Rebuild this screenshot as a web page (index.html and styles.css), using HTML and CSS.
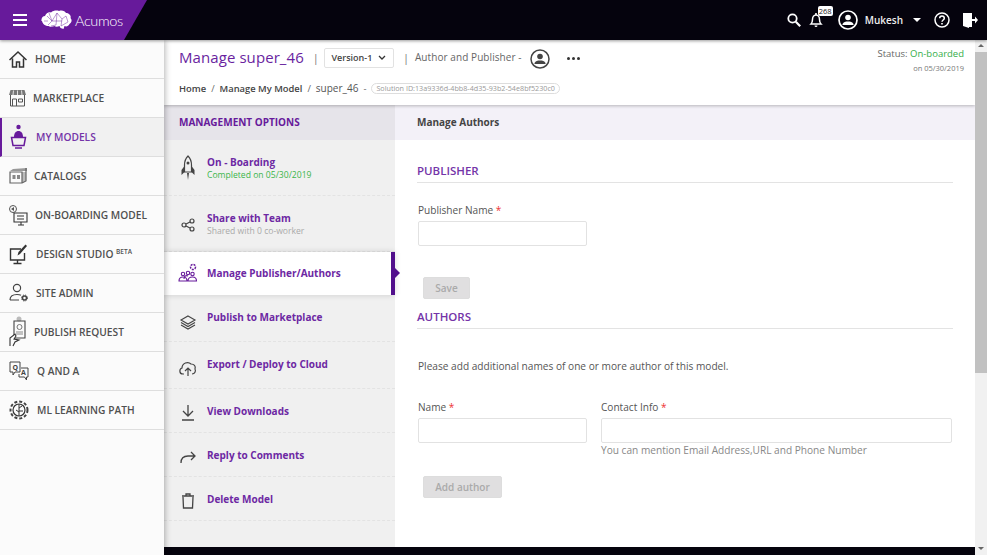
FILE: index.html
```html
<!DOCTYPE html>
<html lang="en">
<head>
    <meta charset="UTF-8">
    <meta name="viewport" content="width=device-width, initial-scale=1.0">
    <title>Acumos - Manage super_46</title>
    <link rel="stylesheet" href="styles.css">
</head>
<body>
    <header class="topbar">
        <div class="brand">
            <div class="burger"><span></span><span></span><span></span></div>
            <svg class="brain" width="31" height="20" viewBox="0 0 31 20">
                <path fill="#fff" d="M.5 11C0 8 2 6 4 6c1-3 4-4.500 6-3.500C12 .5 16 0 18 1c3-1 6 0 7 2 3 0 5.500 3 4.500 5 2 2 1 5-1 6-1 2-3 3-5 2l-1 3-3-1-1-2c-2 1-4 1-5 0-2 1-5 1-6 0-3 0-6-2-6.500-5z"/>
                <path fill="none" stroke="#671a9b" stroke-width=".45" d="M6 6l5 5-4 4M11 11l5-8 5 6 4-3M16 3l-1 12M21 9l-1 7M11 11h10M3 11h4M8 3l3 8M25 6l2 6-7 4M15 15l-5 1"/>
            </svg>
            <span class="brand-name">Acumos</span>
        </div>
        <div class="top-tools">
            <svg class="tool-search" width="16" height="16" viewBox="0 0 16 16"><circle cx="6.5" cy="6.5" r="4.2" fill="none" stroke="#fff" stroke-width="1.8"/><path d="M9.8 9.8l4.4 4.4" stroke="#fff" stroke-width="2.2"/></svg>
            <div class="bell">
                <svg width="14" height="16" viewBox="0 0 14 16"><path fill="none" stroke="#fff" stroke-width="1.5" d="M2 12c1-1 1.500-2 1.500-4.500S5 3 7 3s3.500 2 3.500 4.500S11 11 12 12z"/><path fill="#fff" d="M5.500 13.500h3a1.500 1.500 0 0 1-3 0zM6.200 1h1.600v2H6.200z"/></svg>
                <span class="badge">268</span>
            </div>
            <svg class="tool-user" width="20" height="20" viewBox="0 0 20 20"><circle cx="10" cy="10" r="9" fill="none" stroke="#fff" stroke-width="1.700"/><circle cx="10" cy="7.500" r="2.800" fill="#fff"/><path fill="#fff" d="M4.500 14c1-2 3-2.500 5.500-2.500s4.500.5 5.500 2.500v1h-11z"/></svg>
            <span class="user-name">Mukesh</span>
            <span class="caret"></span>
            <svg class="tool-help" width="16" height="16" viewBox="0 0 16 16"><circle cx="8" cy="8" r="7" fill="none" stroke="#fff" stroke-width="1.500"/><path fill="none" stroke="#fff" stroke-width="1.500" d="M5.700 6.200c0-3 4.600-3 4.600 0 0 1.800-2.300 1.800-2.300 3.600"/><path fill="#fff" d="M7.200 11h1.600v1.600H7.200z"/></svg>
            <svg class="tool-exit" width="15" height="16" viewBox="0 0 15 16"><path fill="#fff" d="M0 1h9v14H6v1L0 14z"/><path fill="#fff" d="M9 7h3V4.500L15 8l-3 3.500V9H9z"/><path fill="#05030d" d="M10 1.500h-.500V6H10zM10 10h-.500v4.500H10z"/></svg>
        </div>
    </header>

    <div class="page">
        <nav class="sidebar">
            <a class="nav-item">
                <svg width="18" height="22" viewBox="0 0 18 22"><path fill="none" stroke="#333" stroke-width="1.500" d="M.5 12L9 4l8.500 8M3.500 10.500V19h4v-5h3v5h4v-8.500"/></svg>
                <span>HOME</span>
            </a>
            <a class="nav-item">
                <svg width="16" height="22" viewBox="0 0 16 22" overflow="visible"><path fill="#777" d="M1.500 3h14l1.500 5H0z"/><path stroke="#fbfbfb" stroke-width=".8" d="M4.500 3.500L4 8M8.500 3.500V8M12.500 3.500L13 8"/><path fill="none" stroke="#555" stroke-width="1" d="M1.500 8v11h14V8M3.500 19v-7h4v7M9.500 12h4v3h-4z"/></svg>
                <span>MARKETPLACE</span>
            </a>
            <a class="nav-item active">
                <svg width="19" height="26" viewBox="0 0 19 26"><circle cx="9.500" cy="3" r="2.200" fill="#671a9b"/><path fill="#671a9b" d="M5 13c0-4 2-6 4.500-6S14 9 14 13z"/><path fill="none" stroke="#671a9b" stroke-width="1.500" d="M2.500 13.500h14l-1.500 8H4zM6 24h7"/></svg>
                <span>MY MODELS</span>
            </a>
            <a class="nav-item">
                <svg width="17" height="22" viewBox="0 0 17 22" overflow="visible"><path fill="#999" d="M4 4l14-1v3H1z"/><path fill="#bbb" d="M13 7h4v9l-4 2z"/><path fill="none" stroke="#666" stroke-width="1.200" d="M1 7h12v11H1zM13 18l4-2V3"/><path fill="#888" d="M3.500 10h3v4h-3zM8 10h3v4H8z"/></svg>
                <span>CATALOGS</span>
            </a>
            <a class="nav-item">
                <svg width="18" height="22" viewBox="0 0 18 22" overflow="visible"><circle cx="4" cy="5" r="3.500" fill="none" stroke="#555"/><path fill="#555" d="M2 5l3-2v4z"/><path fill="none" stroke="#333" stroke-width="1.100" d="M5 9h13v9H5zM9 21h6M12 18v3M8 12h7M8 15h7"/></svg>
                <span>ON-BOARDING MODEL</span>
            </a>
            <a class="nav-item">
                <svg width="19" height="22" viewBox="0 0 19 22"><path fill="none" stroke="#333" stroke-width="1.400" d="M12 6H1.500v11h14V10M8.500 17v3M4.500 20.500h8"/><path fill="#333" d="M16.500 1.500L18 3l-7 8-2.500 1.500L9.500 9z"/></svg>
                <span>DESIGN STUDIO <sup>BETA</sup></span>
            </a>
            <a class="nav-item">
                <svg width="19" height="22" viewBox="0 0 19 22" overflow="visible"><circle cx="8" cy="6" r="3.600" fill="none" stroke="#444" stroke-width="1.200"/><path fill="none" stroke="#444" stroke-width="1.200" d="M1 18c0-4 3-5.500 7-5.500 1.500 0 3 .2 4 .8M1 18h9"/><circle cx="15.500" cy="16" r="2" fill="none" stroke="#444" stroke-width="1.500"/><circle cx="15.500" cy="16" r="3" fill="none" stroke="#444" stroke-width="1" stroke-dasharray="1.200 1.200"/></svg>
                <span>SITE ADMIN</span>
            </a>
            <a class="nav-item">
                <svg width="17" height="32" viewBox="0 0 17 32"><circle cx="10" cy="3" r="2.500" fill="#bbb"/><path fill="none" stroke="#444" stroke-width="1.100" d="M5 5h11v17H5z"/><circle cx="10.500" cy="11" r="2.500" fill="none" stroke="#777"/><path stroke="#888" d="M7 16h7M7 18h7"/><path fill="#fbfbfb" stroke="#333" stroke-width="1.100" d="M1 30v-8l5-4 1 2-2 3 5 1-4 2-2 4"/></svg>
                <span>PUBLISH REQUEST</span>
            </a>
            <a class="nav-item">
                <svg width="20" height="22" viewBox="0 0 20 22"><path fill="none" stroke="#444" stroke-width="1" d="M1 2h10v10H6l-2 3v-3H1zM12 8h7v9h-1.500v3l-2-3H10v-3"/><text class="qa-letter" x="3.500" y="10">Q</text><text class="qa-letter" x="12" y="15">A</text></svg>
                <span>Q AND A</span>
            </a>
            <a class="nav-item">
                <svg width="20" height="22" viewBox="0 0 20 22"><circle cx="10" cy="11" r="6" fill="none" stroke="#333" stroke-width="1.200"/><circle cx="10" cy="11" r="8.500" fill="none" stroke="#444" stroke-width="2" stroke-dasharray="3 2"/><path fill="none" stroke="#333" d="M10 5v12M10 9l3-2M10 13l-3-2M10 12h4"/></svg>
                <span>ML LEARNING PATH</span>
            </a>
        </nav>

        <div class="main">
            <div class="head">
                <div class="head-left">
                    <div class="title-row">
                        <h1>Manage super_46</h1>
                        <span class="pipe">|</span>
                        <div class="version">Version-1
                            <svg width="8" height="6" viewBox="0 0 8 6"><path fill="none" stroke="#333" stroke-width="1.300" d="M1 1l3 3 3-3"/></svg>
                        </div>
                        <span class="pipe pipe-two">|</span>
                        <span class="author-label">Author and Publisher -</span>
                        <svg class="author-icon" width="20" height="20" viewBox="0 0 20 20"><circle cx="10" cy="10" r="9" fill="none" stroke="#444" stroke-width="1.500"/><circle cx="10" cy="7.500" r="2.800" fill="#444"/><path fill="#444" d="M4.500 14c1-2 3-2.500 5.500-2.500s4.500.5 5.500 2.500v1h-11z"/></svg>
                        <span class="dots"><i></i><i></i><i></i></span>
                    </div>
                    <div class="crumbs">
                        <span class="crumb">Home</span>
                        <span class="slash">/</span>
                        <span class="crumb">Manage My Model</span>
                        <span class="slash">/</span>
                        <span class="crumb-now">super_46</span>
                        <span class="slash">-</span>
                        <span class="solution">Solution ID:13a9336d-4bb8-4d35-93b2-54e8bf5230c0</span>
                    </div>
                </div>
                <div class="status">
                    <div>Status: <b>On-boarded</b></div>
                    <small>on 05/30/2019</small>
                </div>
            </div>

            <div class="body">
                <aside class="options">
                    <div class="options-head">MANAGEMENT OPTIONS</div>
                    <a class="opt opt-tall">
                        <svg width="20" height="26" viewBox="0 0 20 26"><path fill="none" stroke="#444" stroke-width="1.200" d="M10 1c3 3 3.500 6 3.500 9v7h-7v-7c0-3 .5-6 3.500-9z"/><path fill="#444" d="M6.500 11l-3 4v5l3-3zM13.500 11l3 4v5l-3-3zM9 18h2l-1 7z"/><circle cx="10" cy="8" r="1.500" fill="#444"/></svg>
                        <div><b>On - Boarding</b><small class="ok">Completed on 05/30/2019</small></div>
                    </a>
                    <a class="opt opt-tall">
                        <svg width="20" height="20" viewBox="0 0 20 20"><g fill="none" stroke="#444" stroke-width="1.200"><circle cx="6" cy="11" r="2"/><circle cx="14" cy="7" r="2"/><circle cx="14" cy="15" r="2"/><path d="M8 10l4-2M8 12l4 2"/></g></svg>
                        <div><b>Share with Team</b><small>Shared with 0 co-worker</small></div>
                    </a>
                    <a class="opt opt-active">
                        <svg width="20" height="20" viewBox="0 0 20 20"><g fill="none" stroke="#671a9b" stroke-width="1.100"><circle cx="5" cy="11" r="1.700"/><circle cx="10" cy="10" r="1.700"/><circle cx="14.500" cy="11" r="1.700"/><path d="M1 18c0-3 2-4 4-4s4 1 4 4zM6 16c0-3 2-4 4-3M10 18c0-3 2-4 4.500-4s4 1 4 4z"/></g><circle cx="15" cy="4" r="2.500" fill="none" stroke="#671a9b" stroke-width="1.500" stroke-dasharray="2 1"/></svg>
                        <div><b>Manage Publisher/Authors</b></div>
                    </a>
                    <a class="opt opt-publish">
                        <svg width="20" height="20" viewBox="0 0 20 20"><g fill="none" stroke="#444" stroke-width="1.100"><path d="M10 5l7 4-7 4-7-4z"/><path d="M3 11.500l7 4 7-4M3 14l7 4 7-4"/></g></svg>
                        <div><b>Publish to Marketplace</b></div>
                    </a>
                    <a class="opt opt-publish">
                        <svg width="20" height="20" viewBox="0 0 20 20"><g fill="none" stroke="#444" stroke-width="1.200"><path d="M6 16H5c-4 0-4-5-1-6 0-5 6-7 9-4 3 0 5 2 4 5 1 2 0 5-3 5"/><path d="M10 18v-8M7 13l3-3 3 3"/></g></svg>
                        <div><b>Export / Deploy to Cloud</b></div>
                    </a>
                    <a class="opt opt-short">
                        <svg width="20" height="20" viewBox="0 0 20 20"><g fill="none" stroke="#444" stroke-width="1.300"><path d="M10 3v10M5 9l5 5 5-5M4 18h12"/></g></svg>
                        <div><b>View Downloads</b></div>
                    </a>
                    <a class="opt opt-short">
                        <svg width="20" height="20" viewBox="0 0 20 20"><g fill="none" stroke="#444" stroke-width="1.300"><path d="M3 17c0-5 3-7 7-7h7M13 6l4 4-4 4"/></g></svg>
                        <div><b>Reply to Comments</b></div>
                    </a>
                    <a class="opt opt-short">
                        <svg width="20" height="20" viewBox="0 0 20 20"><g fill="none" stroke="#444" stroke-width="1.300"><path d="M5 7l.5 11h9L15 7M4 6h12M8 6V4h4v2"/></g></svg>
                        <div><b>Delete Model</b></div>
                    </a>
                </aside>

                <section class="panel">
                    <div class="panel-head">Manage Authors</div>
                    <div class="panel-body">
                        <h2>PUBLISHER</h2>
                        <div class="field field-publisher">
                            <label>Publisher Name <em>*</em></label>
                            <input type="text">
                        </div>
                        <button class="btn btn-save" disabled>Save</button>
                        <h2 class="authors-title">AUTHORS</h2>
                        <p class="note">Please add additional names of one or more author of this model.</p>
                        <div class="author-fields">
                            <div class="field">
                                <label>Name <em>*</em></label>
                                <input type="text">
                            </div>
                            <div class="field field-wide">
                                <label>Contact Info <em>*</em></label>
                                <input type="text">
                                <span class="hint">You can mention Email Address,URL and Phone Number</span>
                            </div>
                        </div>
                        <button class="btn btn-add" disabled>Add author</button>
                    </div>
                </section>
            </div>
            <div class="foot"></div>
        </div>

        <div class="scrollbar">
            <span class="arrow-up"></span>
            <span class="thumb"></span>
            <span class="arrow-down"></span>
        </div>
    </div>
</body>
</html>
```

FILE: styles.css
```css
* {
    box-sizing: border-box;
}
body {
    margin: 0;
    height: 555px;
    overflow: hidden;
    font-family: "Open Sans", Arial, sans-serif;
    color: #444;
    background: #fff;
}

/* top bar */
.topbar {
    height: 40px;
    background: #05030d;
    display: flex;
    align-items: center;
    justify-content: space-between;
    position: relative;
    z-index: 3;
    box-shadow: 0 1px 3px rgba(0, 0, 0, 0.4);
}
.brand {
    width: 147px;
    height: 40px;
    padding-left: 13px;
    background: #671a9b;
    clip-path: polygon(0 0, 100% 0, 124px 100%, 0 100%);
    display: flex;
    align-items: center;
}
.burger {
    width: 14px;
    display: flex;
    flex-direction: column;
    gap: 3px;
}
.burger span {
    height: 2px;
    background: #fff;
}
.brain {
    margin-left: 14px;
}
.brand-name {
    margin-left: 3px;
    color: #fff;
    font-family: Lato, sans-serif;
    font-weight: 300;
    font-size: 14.5px;
    letter-spacing: -0.4px;
}
.top-tools {
    display: flex;
    align-items: center;
    padding-right: 9px;
}
.bell {
    margin-left: 7px;
    position: relative;
    display: flex;
}
.badge {
    position: absolute;
    left: 9px;
    top: -6px;
    width: 15px;
    height: 10px;
    background: #fff;
    border-radius: 2px;
    color: #222;
    font-size: 7.5px;
    line-height: 10px;
    text-align: center;
}
.tool-user {
    margin-left: 15px;
}
.user-name {
    margin-left: 7px;
    color: #eee;
    font-size: 10px;
    font-weight: 600;
}
.caret {
    margin-left: 10px;
    border-left: 4px solid transparent;
    border-right: 4px solid transparent;
    border-top: 4px solid #fff;
}
.tool-help {
    margin-left: 13px;
}
.tool-exit {
    margin-left: 13px;
}

/* page frame */
.page {
    display: flex;
    height: 515px;
}

/* left navigation */
.sidebar {
    width: 164px;
    flex: none;
    background: #fbfbfb;
    position: relative;
    z-index: 2;
    box-shadow: 1px 0 6px rgba(0, 0, 0, 0.3);
}
.nav-item {
    height: 39px;
    padding-left: 9px;
    display: flex;
    align-items: center;
    gap: 8px;
    border-bottom: 1px solid #dedede;
    color: #505050;
    font-size: 10.2px;
    font-weight: 600;
    white-space: nowrap;
}
.nav-item sup {
    font-size: 6.5px;
    line-height: 0;
}
.nav-item.active {
    background: #f1f1f1;
    border-left: 2px solid #671a9b;
    padding-left: 7px;
    color: #7434a8;
}
.qa-letter {
    font-size: 7px;
    font-weight: 700;
    fill: #444;
}

/* page head */
.main {
    flex: 1;
    min-width: 0;
    display: flex;
    flex-direction: column;
}
.head {
    height: 65px;
    flex: none;
    padding: 6px 11px 0 15px;
    display: flex;
    justify-content: space-between;
    background: #fff;
    position: relative;
    z-index: 1;
    box-shadow: 0 1px 3px rgba(0, 0, 0, 0.25);
}
.title-row {
    height: 22px;
    margin-bottom: 13px;
    display: flex;
    align-items: center;
}
h1 {
    margin: 0;
    color: #6a1fa0;
    font-size: 15px;
    font-weight: 400;
    letter-spacing: 0.08px;
    white-space: nowrap;
}
.pipe {
    margin-left: 9px;
    color: #777;
    font-size: 11px;
}
.pipe-two {
    margin-left: 9px;
}
.version {
    margin-left: 5px;
    width: 70px;
    height: 20px;
    margin-top: 1px;
    border: 1px solid #e2e2e2;
    border-radius: 2px;
    display: flex;
    align-items: center;
    justify-content: center;
    gap: 6px;
    color: #444;
    font-size: 9px;
    font-weight: 600;
}
.author-label {
    margin-left: 6px;
    color: #666;
    font-size: 10px;
    letter-spacing: 0.08px;
    white-space: nowrap;
}
.author-icon {
    margin-left: 8px;
    margin-top: 3px;
}
.dots {
    margin-left: 17px;
    margin-top: 3px;
    display: flex;
    gap: 2px;
}
.dots i {
    width: 3px;
    height: 3px;
    border-radius: 50%;
    background: #333;
}
.crumbs {
    display: flex;
    align-items: center;
    white-space: nowrap;
    font-size: 9.4px;
}
.crumb {
    color: #444;
    font-weight: 600;
}
.crumb-now {
    color: #555;
    font-size: 10px;
}
.slash {
    margin: 0 5px;
    color: #666;
}
.solution {
    height: 11px;
    padding: 0 4px;
    border: 1px solid #ddd;
    border-radius: 6px;
    color: #999;
    font-size: 7.2px;
    line-height: 9px;
}
.status {
    text-align: right;
    color: #666;
    font-size: 9.5px;
    padding-top: 1px;
}
.status b {
    color: #35ae4a;
    font-weight: 400;
}
.status small {
    display: block;
    margin-top: 3px;
    font-size: 7.5px;
    color: #777;
}

/* options column */
.body {
    flex: 1;
    min-height: 0;
    display: flex;
}
.options {
    width: 231px;
    flex: none;
    background: #f0f0f0;
}
.options-head {
    height: 35px;
    padding-left: 15px;
    background: #e6e4ea;
    color: #671a9b;
    font-size: 10px;
    font-weight: 700;
    line-height: 35px;
}
.opt {
    padding-left: 14px;
    display: flex;
    align-items: center;
    gap: 9px;
    border-bottom: 1px dashed #e3e3e3;
    position: relative;
}
.opt b {
    display: block;
    color: #6d28a3;
    font-size: 10px;
    font-weight: 700;
}
.opt small {
    display: block;
    color: #aaa;
    font-size: 8.6px;
}
.opt small.ok {
    color: #3bb54a;
}
.opt-tall {
    height: 56px;
}
.opt-publish {
    height: 47px;
}
.opt-publish > div {
    margin-bottom: 3px;
}
.opt-publish > svg {
    margin-top: 5px;
}
.opt-short {
    height: 44px;
}
.opt-short > svg {
    margin-top: 3px;
}
.opt-active {
    height: 43px;
    padding-bottom: 1px;
    background: #fff;
    border-bottom: none;
    border-right: 4px solid #52108c;
    box-shadow: 0 0 6px rgba(0, 0, 0, 0.15);
}
.opt-active::after {
    content: "";
    position: absolute;
    right: -9px;
    top: 16px;
    border-left: 5px solid #52108c;
    border-top: 5px solid transparent;
    border-bottom: 5px solid transparent;
}

/* form panel */
.panel {
    flex: 1;
    min-width: 0;
}
.panel-head {
    height: 35px;
    padding-left: 22px;
    background: #f3f1f8;
    color: #444;
    font-size: 10px;
    font-weight: 700;
    line-height: 35px;
}
.panel-body {
    padding: 23px 22px 0;
}
h2 {
    margin: 0;
    height: 20px;
    border-bottom: 1px solid #e3e3e3;
    color: #7434a8;
    font-size: 11.5px;
    font-weight: 600;
    line-height: 15px;
}
.field {
    width: 169px;
    margin-left: 1px;
}
.field-publisher {
    margin-top: 20px;
}
.field label {
    display: block;
    color: #555;
    font-size: 10.1px;
    line-height: 15px;
}
.field em {
    color: #e33;
    font-style: normal;
}
.field input {
    display: block;
    width: 100%;
    height: 25px;
    margin: 3px 0 0;
    border: 1px solid #e2e2e2;
    border-radius: 2px;
    background: #fff;
}
.field-wide {
    width: 351px;
    margin-left: 14px;
}
.btn {
    display: block;
    height: 22px;
    margin-left: 6px;
    border: 1px solid #ddd;
    border-radius: 2px;
    background: #e0dfe0;
    color: #aaa;
    font-family: inherit;
    font-size: 10px;
    font-weight: 600;
}
.btn-save {
    width: 47px;
    margin-top: 31px;
}
.authors-title {
    margin-top: 10px;
}
.note {
    margin: 30px 0 0 1px;
    color: #555;
    font-size: 10.15px;
    line-height: 14px;
}
.author-fields {
    margin-top: 27px;
    display: flex;
}
.hint {
    display: block;
    color: #888;
    font-size: 10.15px;
    line-height: 14px;
    white-space: nowrap;
}
.btn-add {
    width: 79px;
    margin-top: 19px;
}
.foot {
    height: 8px;
    flex: none;
    background: #05030d;
}

/* scrollbar */
.scrollbar {
    width: 12px;
    flex: none;
    background: #f1f1f1;
    display: flex;
    flex-direction: column;
    align-items: center;
    position: relative;
    z-index: 1;
}
.arrow-up {
    margin-top: 4px;
    border-left: 3px solid transparent;
    border-right: 3px solid transparent;
    border-bottom: 3px solid #666;
}
.thumb {
    width: 12px;
    height: 321px;
    margin-top: 5px;
    background: #c1c1c1;
}
.arrow-down {
    margin-top: auto;
    margin-bottom: 5px;
    border-left: 3px solid transparent;
    border-right: 3px solid transparent;
    border-top: 3px solid #666;
}
```
